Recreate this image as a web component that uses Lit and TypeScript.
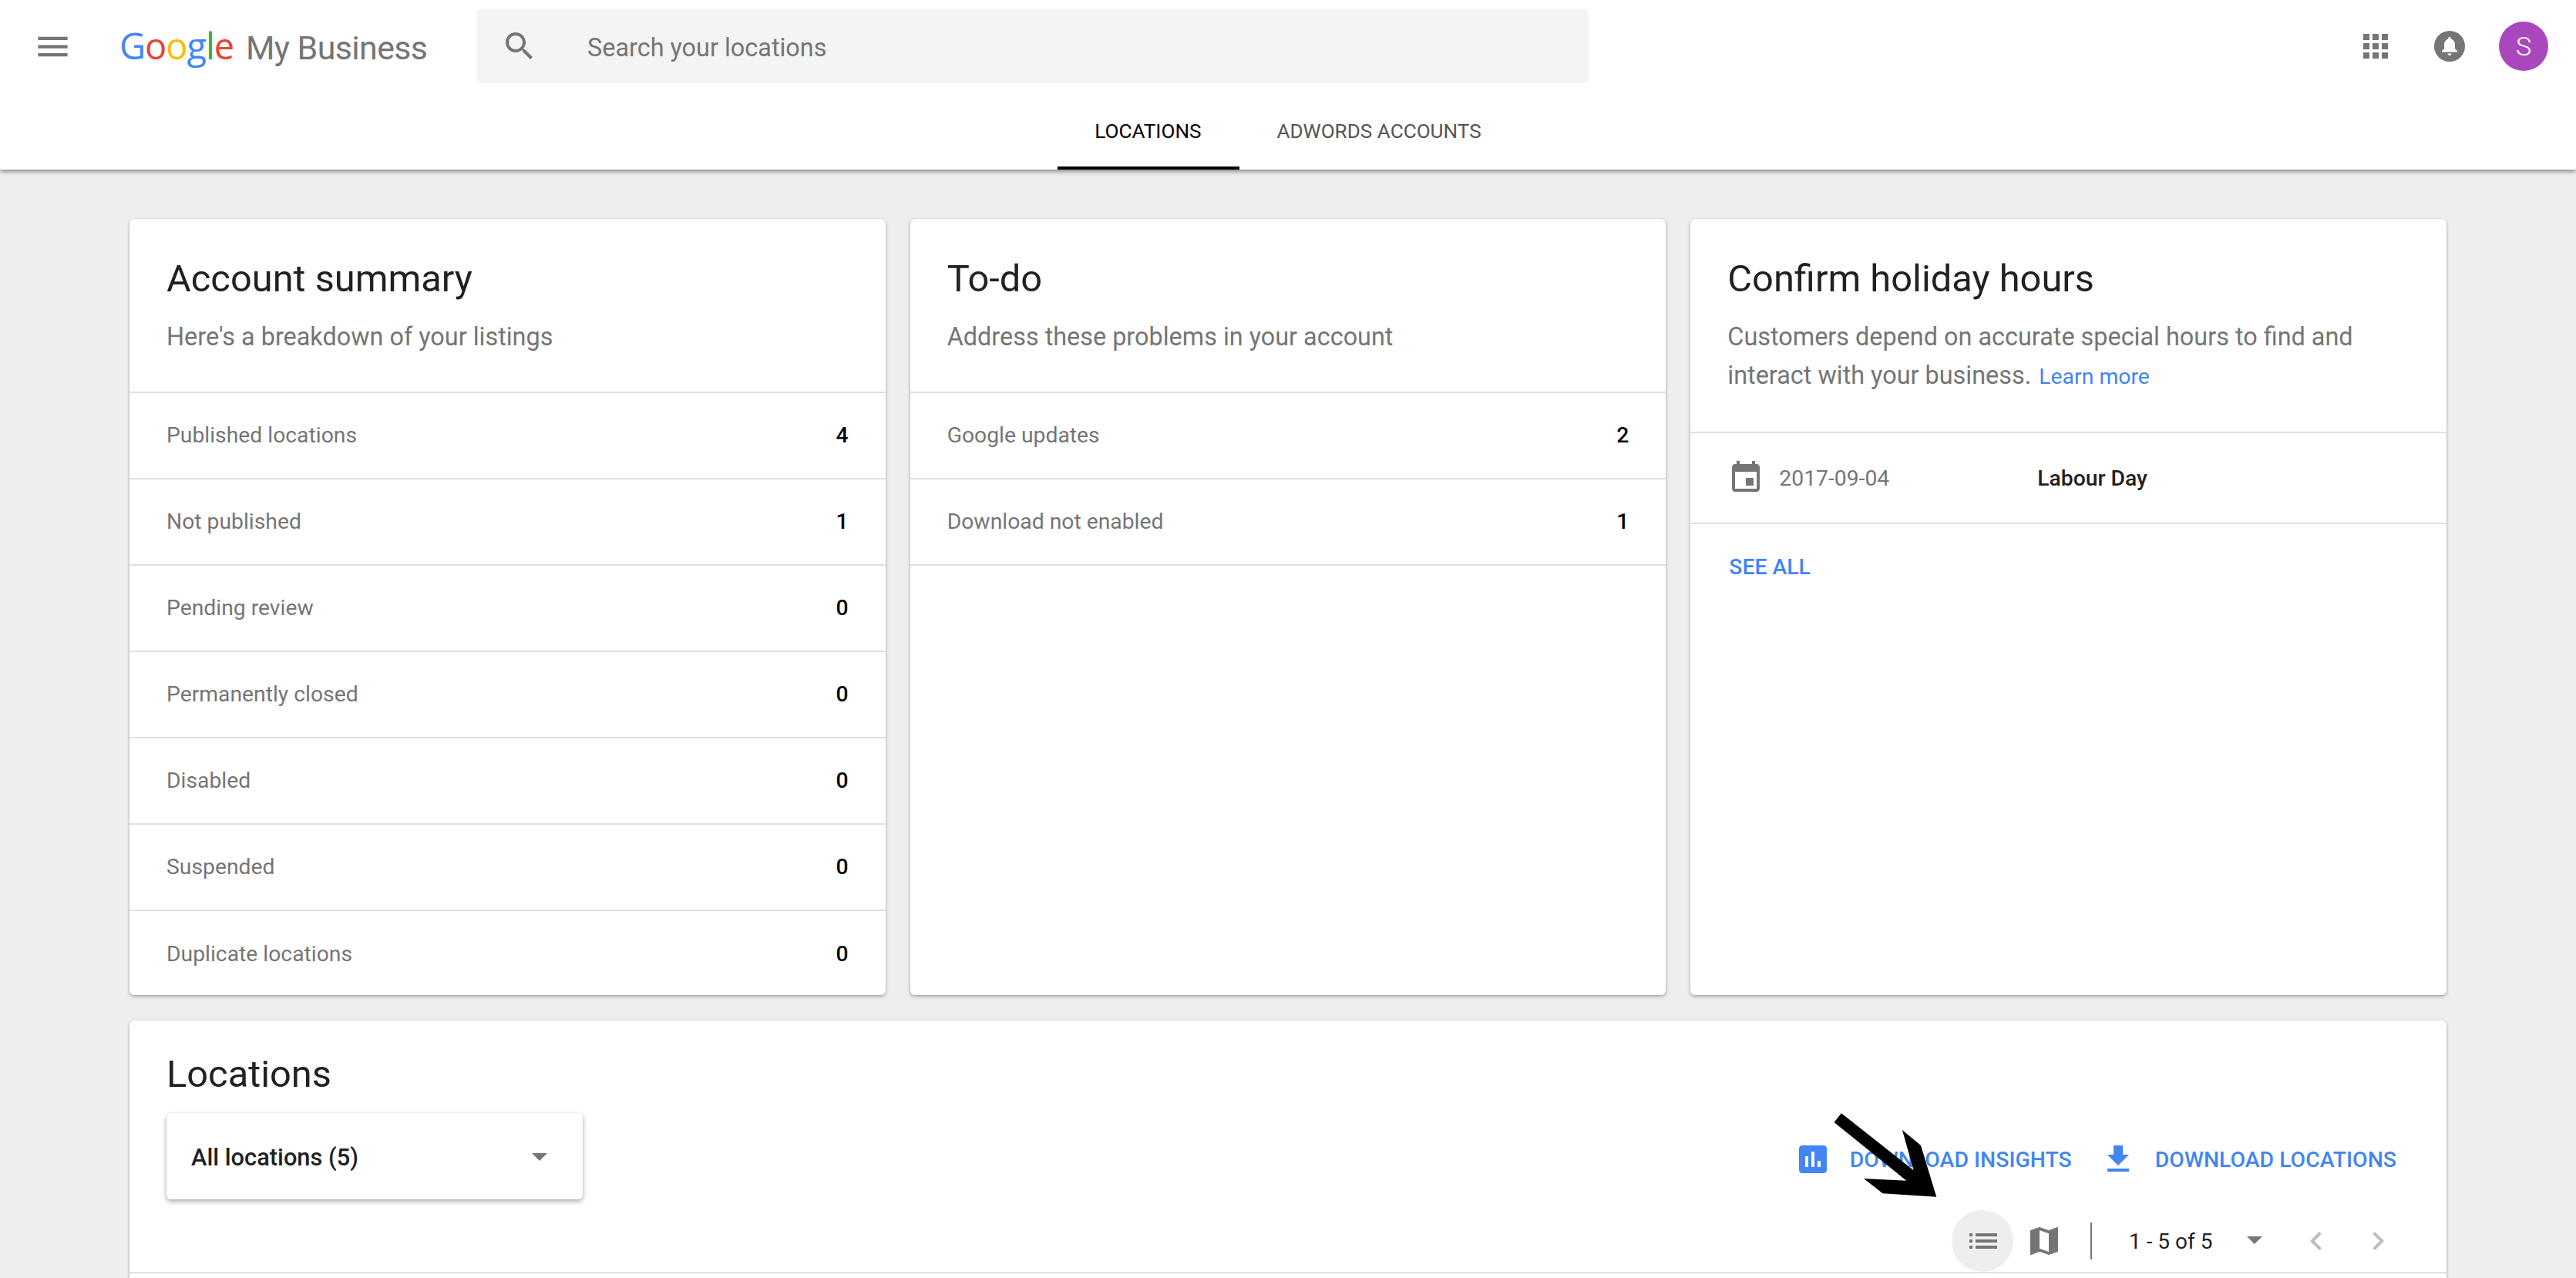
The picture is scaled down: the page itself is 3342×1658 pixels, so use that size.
import { LitElement, html, css, svg } from "lit";
import { customElement } from "lit/decorators.js";

const icon = (d: unknown, cls = "") => html`<svg class="icon ${cls}" viewBox="0 0 24 24">${d}</svg>`;

const MENU = svg`<path d="M3 18h18v-2H3v2zm0-5h18v-2H3v2zm0-7v2h18V6H3z"/>`;
const SEARCH = svg`<path d="M15.5 14h-.79l-.28-.27C15.41 12.59 16 11.11 16 9.5 16 5.91 13.09 3 9.5 3S3 5.91 3 9.5 5.91 16 9.5 16c1.61 0 3.09-.59 4.23-1.57l.27.28v.79l5 4.99L20.49 19l-4.99-5zm-6 0C7.01 14 5 11.99 5 9.5S7.01 5 9.5 5 14 7.01 14 9.5 11.99 14 9.5 14z"/>`;
const APPS = svg`<path d="M4 8h4V4H4v4zm6 12h4v-4h-4v4zm-6 0h4v-4H4v4zm0-6h4v-4H4v4zm6 0h4v-4h-4v4zm6-10v4h4V4h-4zm-6 4h4V4h-4v4zm6 6h4v-4h-4v4zm0 6h4v-4h-4v4z"/>`;
const EVENT = svg`<path d="M17 12h-5v5h5v-5zM16 1v2H8V1H6v2H5c-1.11 0-1.99.9-1.99 2L3 19c0 1.1.89 2 2 2h14c1.1 0 2-.9 2-2V5c0-1.1-.9-2-2-2h-1V1h-2zm3 18H5V8h14v11z"/>`;
const INSIGHTS = svg`<path d="M19 3H5c-1.1 0-2 .9-2 2v14c0 1.1.9 2 2 2h14c1.1 0 2-.9 2-2V5c0-1.1-.9-2-2-2zM9 17H7v-7h2v7zm4 0h-2V7h2v10zm4 0h-2v-4h2v4z"/>`;
const DOWNLOAD = svg`<path d="M19 9h-4V3H9v6H5l7 7 7-7zM5 18v2h14v-2H5z"/>`;
const LIST = svg`<path d="M3 13h2v-2H3v2zm0 4h2v-2H3v2zm0-8h2V7H3v2zm4 4h14v-2H7v2zm0 4h14v-2H7v2zM7 7v2h14V7H7z"/>`;
const MAP = svg`<path d="M20.5 3l-.16.03L15 5.1 9 3 3.36 4.9c-.21.07-.36.25-.36.48V20.5c0 .28.22.5.5.5l.16-.03L9 18.9l6 2.1 5.64-1.9c.21-.07.36-.25.36-.48V3.5c0-.28-.22-.5-.5-.5zM15 19l-6-2.11V5l6 2.11V19z"/>`;
const CARET = svg`<path d="M7 10l5 5 5-5z"/>`;
const PREV = svg`<path d="M15.41 7.41L14 6l-6 6 6 6 1.41-1.41L10.83 12z"/>`;
const NEXT = svg`<path d="M10 6L8.59 7.41 13.17 12l-4.58 4.59L10 18l6-6z"/>`;

const summary = [
  ["Published locations", 4],
  ["Not published", 1],
  ["Pending review", 0],
  ["Permanently closed", 0],
  ["Disabled", 0],
  ["Suspended", 0],
  ["Duplicate locations", 0],
];
const todo = [
  ["Google updates", 2],
  ["Download not enabled", 1],
];

@customElement("app-root")
export class AppRoot extends LitElement {
  static styles = css`
    :host {
      display: block;
      position: relative;
      height: 1658px;
      overflow: hidden;
      background: #eee;
      font-family: Roboto, "Liberation Sans", sans-serif;
      color: #212121;
    }
    .icon { width: 48px; height: 48px; fill: #757575; flex: none; display: block; }
    .blue { fill: #4285f4; }
    .faint { fill: #bdbdbd; }

    header {
      position: relative;
      background: #fff;
      height: 220px;
      box-shadow: 0 2px 6px rgba(0, 0, 0, 0.5);
    }
    .top { display: flex; align-items: center; height: 120px; padding-left: 43px; }
    .menu { width: 51px; height: 51px; }
    .logo { margin-left: 61px; width: 463px; display: flex; align-items: baseline; font-size: 42.9px; line-height: 56px; white-space: nowrap; }
    .google { font-family: "Open Sans", sans-serif; font-size: 47px; letter-spacing: -1.1px; margin-right: 16px; }
    .g1 { color: #4285f4; }
    .g2 { color: #ea4335; }
    .g3 { color: #fbbc05; }
    .g4 { color: #34a853; }
    .mybiz { color: #757575; letter-spacing: -0.6px; }
    .search {
      width: 1443px;
      height: 96px;
      background: #f4f4f4;
      border-radius: 6px;
      display: flex;
      align-items: center;
      padding-left: 32px;
      box-sizing: border-box;
      font-size: 32.4px;
      color: #757575;
    }
    .search span { margin: 4px 0 0 64px; }
    .right { margin-left: auto; display: flex; align-items: center; padding-right: 36px; }
    .bell { width: 40px; height: 40px; margin-left: 52px; display: block; }
    .avatar {
      width: 64px;
      height: 64px;
      border-radius: 50%;
      background: #ab47bc;
      color: #fff;
      font-size: 34px;
      font-weight: 300;
      display: flex;
      align-items: center;
      justify-content: center;
      margin-left: 44px;
    }
    .tabs { display: flex; justify-content: center; height: 100px; }
    .tab {
      padding: 0 48px;
      height: 100px;
      box-sizing: border-box;
      font-size: 26.1px;
      line-height: 100px;
      color: #555;
      white-space: nowrap;
    }
    .tab.on { width: 236px; padding: 0 2px 0 0; text-align: center; color: #000; border-bottom: 4px solid #000; }

    main { padding: 64px 168px 0; }
    .cards { display: grid; grid-template-columns: repeat(3, 1fr); gap: 32px; height: 1007px; }
    .card {
      background: #fff;
      border-radius: 6px;
      overflow: hidden;
      box-shadow: 0 2px 4px rgba(0, 0, 0, 0.3), 0 0 2px rgba(0, 0, 0, 0.12);
    }
    .head { padding: 50px 48px 46px; border-bottom: 2px solid #e0e0e0; }
    .head.tall { padding-bottom: 48px; }
    h2 { margin: 0; font-size: 48.8px; line-height: 56px; font-weight: 400; color: #212121; }
    .head p { margin: 22px 0 0; font-size: 32.4px; line-height: 50px; color: #757575; }
    .head a { margin-left: 2px; font-size: 28.4px; line-height: 1; color: #4285f4; }
    .row {
      display: flex;
      justify-content: space-between;
      align-items: center;
      height: 112px;
      box-sizing: border-box;
      padding: 0 48px 2px;
      border-bottom: 2px solid #e0e0e0;
      font-size: 28.3px;
      color: #757575;
    }
    .row b { font-weight: 500; color: #000; }
    .card.summary .row:last-child { border-bottom: 0; }
    .holiday { height: 118px; justify-content: flex-start; padding-bottom: 0; }
    .date { margin-left: 19px; width: 335px; }
    .label { color: #212121; font-weight: 500; }
    .see { padding: 40px 50px; font-size: 28.3px; line-height: 32px; font-weight: 500; color: #4285f4; }

    .locations { margin-top: 33px; height: 400px; overflow: visible; }
    .loc-head {
      display: flex;
      justify-content: space-between;
      height: 328px;
      box-sizing: border-box;
      border-bottom: 2px solid #e0e0e0;
    }
    .loc-left { padding: 42px 0 0 48px; }
    .select {
      width: 540px;
      height: 112px;
      margin-top: 22px;
      padding: 0 32px;
      box-sizing: border-box;
      display: flex;
      align-items: center;
      justify-content: space-between;
      border-radius: 6px;
      background: #fff;
      box-shadow: 0 3px 6px rgba(0, 0, 0, 0.32), 0 0 2px rgba(0, 0, 0, 0.12);
      font-size: 30.8px;
      font-weight: 500;
      color: #212121;
    }
    .select span { margin-top: 2px; }
    .loc-right { display: flex; flex-direction: column; align-items: flex-end; padding: 156px 65px 0 0; }
    .actions { display: flex; align-items: center; height: 48px; font-size: 28.4px; font-weight: 500; color: #4285f4; }
    .actions span { margin-left: 24px; }
    .actions .icon + span + .icon { margin-left: 36px; }
    .pager { display: flex; align-items: center; height: 80px; margin-top: 42px; font-size: 28px; color: #212121; }
    .btn { width: 80px; height: 80px; border-radius: 50%; display: flex; align-items: center; justify-content: center; }
    .btn.on { background: #eee; }
    .btn.on .icon { margin-left: 1px; }
    .sep { width: 2px; height: 48px; background: #757575; margin: 0 48px 0 20px; }
    .count { width: 106px; white-space: nowrap; }
    .caret { margin: -4px 32px 0 33px; }
    .next { margin-left: 32px; }

    .pointer { position: absolute; left: 2370px; top: 1435px; width: 150px; height: 125px; }
  `;

  private header() {
    return html`<header>
      <div class="top">
        ${icon(MENU, "menu")}
        <div class="logo">
          <span class="google"><span class="g1">G</span><span class="g2">o</span><span class="g3">o</span><span class="g1">g</span><span class="g4">l</span><span class="g2">e</span></span>
          <span class="mybiz">My Business</span>
        </div>
        <div class="search">${icon(SEARCH)}<span>Search your locations</span></div>
        <div class="right">
          ${icon(APPS)}
          <svg class="bell" viewBox="0 0 40 40">
            <circle cx="20" cy="20" r="20" fill="#757575"/>
            <path fill="#fff" d="M20 8c1 0 1.8.8 1.8 1.8v.6c3.2 1 5.2 3.8 5.2 7.1v5.5l3 3v1.5H10v-1.5l3-3v-5.5c0-3.3 2-6.1 5.2-7.1v-.6C18.2 8.8 19 8 20 8z"/>
            <path fill="#fff" d="M17.5 29.5h5c0 1.4-1.1 2.5-2.5 2.5s-2.5-1.1-2.5-2.5z"/>
          </svg>
          <div class="avatar">S</div>
        </div>
      </div>
      <nav class="tabs">
        <div class="tab on">LOCATIONS</div>
        <div class="tab">ADWORDS ACCOUNTS</div>
      </nav>
    </header>`;
  }

  private rows(items: (string | number)[][]) {
    return items.map(([name, n]) => html`<div class="row"><span>${name}</span><b>${n}</b></div>`);
  }

  render() {
    return html`
      ${this.header()}
      <main>
        <div class="cards">
          <section class="card summary">
            <div class="head"><h2>Account summary</h2><p>Here's a breakdown of your listings</p></div>
            ${this.rows(summary)}
          </section>
          <section class="card">
            <div class="head"><h2>To-do</h2><p>Address these problems in your account</p></div>
            ${this.rows(todo)}
          </section>
          <section class="card">
            <div class="head tall">
              <h2>Confirm holiday hours</h2>
              <p>Customers depend on accurate special hours to find and interact with your business. <a>Learn more</a></p>
            </div>
            <div class="row holiday">${icon(EVENT)}<span class="date">2017-09-04</span><span class="label">Labour Day</span></div>
            <div class="see">SEE ALL</div>
          </section>
        </div>
        <section class="card locations">
          <div class="loc-head">
            <div class="loc-left">
              <h2>Locations</h2>
              <div class="select"><span>All locations (5)</span>${icon(CARET)}</div>
            </div>
            <div class="loc-right">
              <div class="actions">
                ${icon(INSIGHTS, "blue")}<span>DOWNLOAD INSIGHTS</span>
                ${icon(DOWNLOAD, "blue")}<span>DOWNLOAD LOCATIONS</span>
              </div>
              <div class="pager">
                <div class="btn on">${icon(LIST)}</div>
                <div class="btn">${icon(MAP)}</div>
                <div class="sep"></div>
                <span class="count">1 - 5 of 5</span>
                ${icon(CARET, "caret")}
                ${icon(PREV, "faint")}
                ${icon(NEXT, "faint next")}
              </div>
            </div>
          </div>
        </section>
      </main>
      <svg class="pointer" viewBox="2370 1435 150 125">
        <polygon points="2388.9,1444.3 2379.5,1456 2473.3,1531.7 2417.9,1529 2442.6,1548.3 2512.3,1552.7 2492,1486 2467.9,1466 2482.7,1518.3"/>
      </svg>
    `;
  }
}
